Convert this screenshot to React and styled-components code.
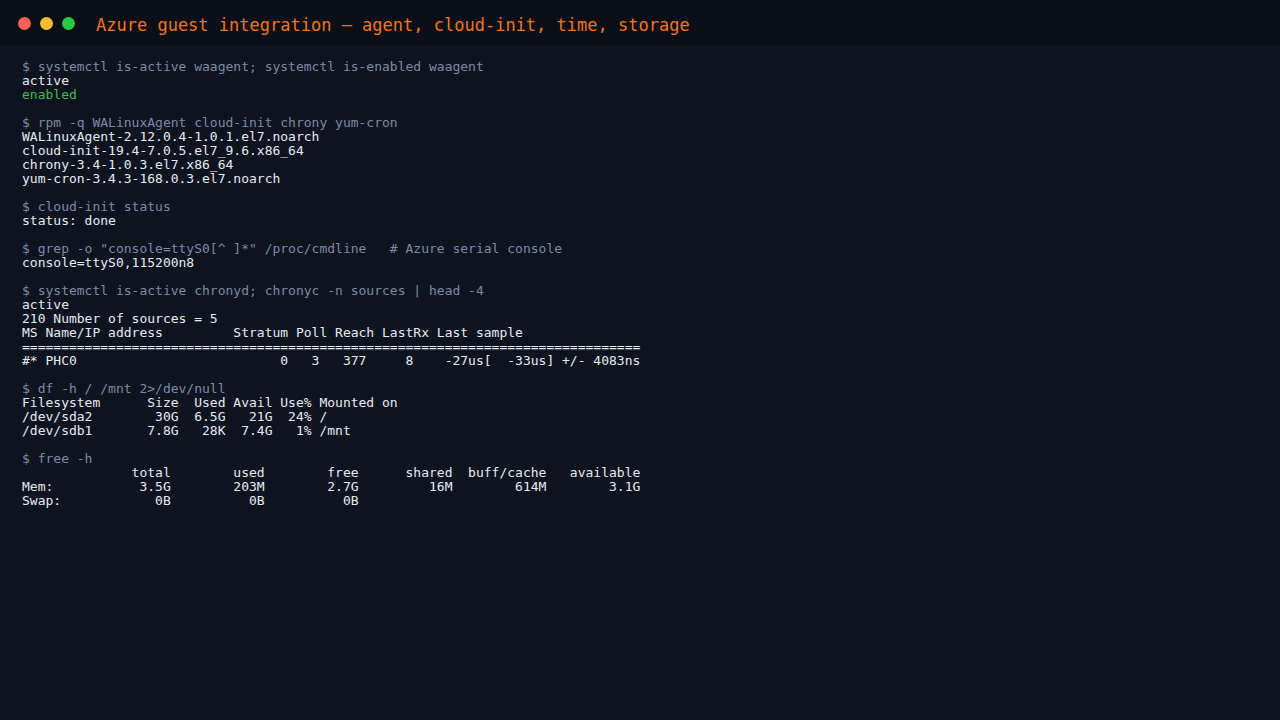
import React from "react";
import styled, { createGlobalStyle } from "styled-components";

const Global = createGlobalStyle`
  html, body { margin: 0; padding: 0; background: #0d1420; }
  body { font-family: "DejaVu Sans Mono", monospace; }
`;

const Window = styled.div`
  width: 1280px;
  height: 720px;
  background: #0d1420;
  display: flex;
  flex-direction: column;
`;

const TitleBar = styled.header`
  height: 45px;
  flex: 0 0 45px;
  background: #0a0e17;
  display: flex;
  align-items: center;
  padding-left: 18px;
  box-sizing: border-box;
`;

const Dots = styled.div`
  display: flex;
  gap: 9px;
  margin-right: 21px;
  padding-top: 1px;
`;

const Dot = styled.span`
  width: 13px;
  height: 13px;
  border-radius: 50%;
  background: ${(p) => p.$color};
`;

const Title = styled.h1`
  margin: 0;
  font-family: "DejaVu Sans Mono", monospace;
  font-weight: normal;
  font-size: 17px;
  color: #f0761e;
  line-height: 1;
  padding-top: 5px;
`;

const Body = styled.main`
  padding: 15px 22px;
  font-family: "DejaVu Sans Mono", monospace;
  font-size: 13px;
  line-height: 14px;
`;

const Block = styled.section`
  margin-bottom: 14px;
`;

const colors = {
  cmd: "#7d8aa3",
  out: "#e6ebf2",
  ok: "#3fb950",
};

const Line = styled.div`
  white-space: pre;
  color: ${(p) => colors[p.$kind || "out"]};
  height: 14px;
`;

const blocks = [
  [
    ["cmd", "$ systemctl is-active waagent; systemctl is-enabled waagent"],
    ["out", "active"],
    ["ok", "enabled"],
  ],
  [
    ["cmd", "$ rpm -q WALinuxAgent cloud-init chrony yum-cron"],
    ["out", "WALinuxAgent-2.12.0.4-1.0.1.el7.noarch"],
    ["out", "cloud-init-19.4-7.0.5.el7_9.6.x86_64"],
    ["out", "chrony-3.4-1.0.3.el7.x86_64"],
    ["out", "yum-cron-3.4.3-168.0.3.el7.noarch"],
  ],
  [
    ["cmd", "$ cloud-init status"],
    ["out", "status: done"],
  ],
  [
    ["cmd", '$ grep -o "console=ttyS0[^ ]*" /proc/cmdline   # Azure serial console'],
    ["out", "console=ttyS0,115200n8"],
  ],
  [
    ["cmd", "$ systemctl is-active chronyd; chronyc -n sources | head -4"],
    ["out", "active"],
    ["out", "210 Number of sources = 5"],
    ["out", "MS Name/IP address         Stratum Poll Reach LastRx Last sample"],
    ["out", "==============================================================================="],
    ["out", "#* PHC0                          0   3   377     8    -27us[  -33us] +/- 4083ns"],
  ],
  [
    ["cmd", "$ df -h / /mnt 2>/dev/null"],
    ["out", "Filesystem      Size  Used Avail Use% Mounted on"],
    ["out", "/dev/sda2        30G  6.5G   21G  24% /"],
    ["out", "/dev/sdb1       7.8G   28K  7.4G   1% /mnt"],
  ],
  [
    ["cmd", "$ free -h"],
    ["out", "              total        used        free      shared  buff/cache   available"],
    ["out", "Mem:           3.5G        203M        2.7G         16M        614M        3.1G"],
    ["out", "Swap:            0B          0B          0B"],
  ],
];

export default function App() {
  return (
    <>
      <Global />
      <Window>
        <TitleBar>
          <Dots>
            <Dot $color="#ff5f57" />
            <Dot $color="#febc2e" />
            <Dot $color="#28c840" />
          </Dots>
          <Title>Azure guest integration — agent, cloud-init, time, storage</Title>
        </TitleBar>
        <Body>
          {blocks.map((b, i) => (
            <Block key={i}>
              {b.map(([k, t], j) => (
                <Line key={j} $kind={k}>
                  {t}
                </Line>
              ))}
            </Block>
          ))}
        </Body>
      </Window>
    </>
  );
}
